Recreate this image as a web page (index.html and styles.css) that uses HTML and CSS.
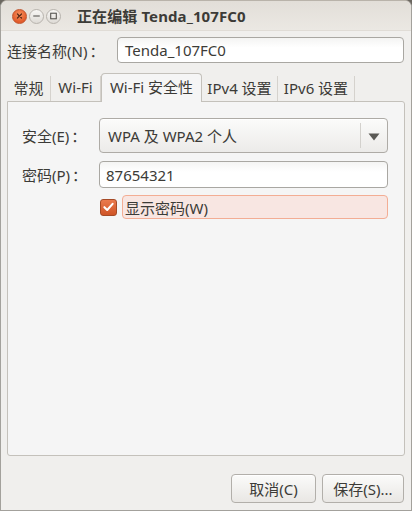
FILE: index.html
```html
<!DOCTYPE html>
<html lang="zh">
<head>
<meta charset="utf-8">
<title>正在编辑 Tenda_107FC0</title>
<link rel="stylesheet" href="styles.css">
</head>
<body>
<div class="window">
  <div class="titlebar">
    <div class="wbtns">
      <span class="wbtn close"><svg width="14" height="14" viewBox="0 0 14 14"><path d="M4.8 4.8 L9.2 9.2 M9.2 4.8 L4.8 9.2" stroke="#5a2a18" stroke-width="1.3" stroke-linecap="round"/></svg></span>
      <span class="wbtn"><svg width="14" height="14" viewBox="0 0 14 14"><path d="M3.5 7 H10.5" stroke="#4c4a46" stroke-width="1.2"/></svg></span>
      <span class="wbtn"><svg width="14" height="14" viewBox="0 0 14 14"><rect x="4" y="4" width="6" height="6" fill="none" stroke="#4c4a46" stroke-width="1.1"/></svg></span>
    </div>
    <div class="title">正在编辑 Tenda_107FC0</div>
  </div>
  <div class="content">
    <div class="namerow">
      <span class="label">连接名称(N)<span class="colon">：</span></span>
      <div class="entry name-entry">Tenda_107FC0</div>
    </div>
    <div class="tabs">
      <div class="tab first">常规</div>
      <div class="tab">Wi-Fi</div>
      <div class="tab active">Wi-Fi 安全性</div>
      <div class="tab">IPv4 设置</div>
      <div class="tab last">IPv6 设置</div>
    </div>
    <div class="panel">
      <div class="formrow">
        <span class="flabel">安全(E)<span class="colon">：</span></span>
        <div class="combo">
          <span class="combo-text">WPA 及 WPA2 个人</span>
          <span class="combo-sep"></span>
          <span class="combo-arrow"><svg width="12" height="8" viewBox="0 0 12 8"><path d="M0.5 0.5 H11.5 L6 7.5 Z" fill="#5a5955"/></svg></span>
        </div>
      </div>
      <div class="formrow pw">
        <span class="flabel">密码(P)<span class="colon">：</span></span>
        <div class="entry pw-entry">87654321</div>
      </div>
      <div class="checkrow">
        <span class="checkbox"><svg width="16" height="16" viewBox="0 0 16 16"><path d="M3.6 8.2 L6.6 11.2 L12.4 4.6" fill="none" stroke="#ffffff" stroke-width="2.2" stroke-linecap="round" stroke-linejoin="round"/></svg></span>
        <span class="checklabel">显示密码(W)</span>
      </div>
    </div>
    <div class="buttons">
      <div class="btn">取消(C)</div>
      <div class="btn">保存(S)...</div>
    </div>
  </div>
</div>
</body>
</html>
```

FILE: styles.css
```css
html, body {
  margin: 0;
  padding: 0;
  background: #6b6760;
}
body {
  width: 412px;
  height: 511px;
  overflow: hidden;
  font-family: "Noto Sans", "Noto Sans CJK SC", sans-serif;
  font-size: 15px;
  color: #3c3b37;
}
.window {
  box-sizing: border-box;
  width: 412px;
  height: 511px;
  border: 1px solid #a3a19c;
  border-top-color: #b9b3aa;
  border-radius: 7px 7px 0 0;
  background: #f0efed;
  display: flex;
  flex-direction: column;
  overflow: hidden;
}
.titlebar {
  height: 29px;
  flex: none;
  display: flex;
  align-items: center;
  background: linear-gradient(#e2ded8, #ebe8e3);
  border-bottom: 1px solid #e0dcd6;
}
.wbtns {
  display: flex;
  gap: 2px;
  padding-left: 11px;
  margin-top: 1px;
}
.wbtn {
  box-sizing: border-box;
  width: 15px;
  height: 15px;
  border-radius: 50%;
  border: 1px solid #b7b3ad;
  background: linear-gradient(#f8f7f5, #dedbd6);
  display: flex;
  align-items: center;
  justify-content: center;
}
.wbtn svg { display: block; }
.wbtn.close {
  border-color: #c0552e;
  background: radial-gradient(circle at 50% 35%, #f7925f, #e25b2b 70%);
}
.title {
  margin-left: 16px;
  font-weight: bold;
  font-size: 15px;
  color: #3c3b37;
  letter-spacing: 0.1px;
}
.content {
  flex: 1;
  display: flex;
  flex-direction: column;
  padding: 6px 6px 0 5px;
}
.namerow {
  display: flex;
  align-items: center;
  height: 26px;
}
.label {
  width: 110px;
  padding-left: 1px;
  white-space: nowrap;
}
.colon {
  font-family: "Noto Sans CJK TC", "Noto Sans CJK SC", sans-serif;
  margin-left: 2px;
}
.entry {
  box-sizing: border-box;
  height: 26px;
  border: 1px solid #a9a7a2;
  border-radius: 4px;
  background: linear-gradient(#f4f4f3, #ffffff 40%);
  display: flex;
  align-items: center;
}
.name-entry {
  flex: 1;
  padding-left: 7px;
  margin-right: 1px;
}
.tabs {
  display: flex;
  align-items: flex-end;
  margin-top: 9px;
  height: 29px;
  padding-left: 1px;
}
.tab {
  height: 25px;
  box-sizing: border-box;
  display: flex;
  align-items: center;
  justify-content: center;
  border-right: 1px solid #d5d2cd;
  padding-bottom: 3px;
  white-space: nowrap;
}
.tab.first { width: 44px; }
.tab:nth-child(2) { width: 50px; }
.tab.active {
  width: 101px;
  height: 29px;
  background: #f5f5f5;
  border: 1px solid #c4c1bb;
  border-bottom: none;
  border-radius: 4px 4px 0 0;
  padding-bottom: 4px;
  margin-bottom: -1px;
  position: relative;
  z-index: 1;
}
.tab:nth-child(4) { width: 76px; }
.tab.last { width: 77px; }
.panel {
  box-sizing: border-box;
  height: 355px;
  margin-left: 1px;
  border: 1px solid #c4c1bb;
  border-radius: 0 3px 3px 3px;
  background: #f5f5f5;
  padding: 16px 16px 0 14px;
}
.formrow {
  display: flex;
  align-items: center;
}
.flabel {
  width: 77px;
  white-space: nowrap;
}
.combo {
  box-sizing: border-box;
  flex: 1;
  height: 35px;
  border: 1px solid #aeaba6;
  border-radius: 4px;
  background: linear-gradient(#fbfbfa, #ecebe9);
  display: flex;
  align-items: center;
  box-shadow: inset 0 1px 0 #ffffff;
}
.combo-text {
  flex: 1;
  padding-left: 8px;
}
.combo-sep {
  width: 1px;
  height: 25px;
  background: #d3d1cd;
}
.combo-arrow {
  width: 26px;
  display: flex;
  justify-content: center;
  padding-top: 2px;
}
.combo-arrow svg { display: block; }
.pw { margin-top: 8px; }
.pw-entry {
  flex: 1;
  height: 27px;
  padding-left: 6px;
}
.checkrow {
  display: flex;
  align-items: center;
  margin-top: 7px;
  margin-left: 78px;
}
.checkbox {
  box-sizing: border-box;
  width: 17px;
  height: 17px;
  border-radius: 3px;
  border: 1px solid #a54a26;
  background: linear-gradient(#ea7b4e, #cf5426);
  display: flex;
  align-items: center;
  justify-content: center;
  flex: none;
}
.checkbox svg { display: block; }
.checklabel {
  flex: 1;
  box-sizing: border-box;
  height: 24px;
  margin-left: 5px;
  border: 1px solid #f3ad94;
  border-radius: 4px;
  background: #f8e6e2;
  display: flex;
  align-items: center;
  padding-left: 2px;
}
.buttons {
  display: flex;
  justify-content: flex-end;
  gap: 6px;
  margin-top: 18px;
  padding-right: 1px;
}
.btn {
  box-sizing: border-box;
  height: 29px;
  width: 85px;
  border: 1px solid #b2afaa;
  border-radius: 4px;
  background: linear-gradient(#fbfbfa, #e9e7e4);
  display: flex;
  align-items: center;
  justify-content: center;
  box-shadow: inset 0 1px 0 #ffffff;
}
.btn + .btn { width: 82px; }
```
